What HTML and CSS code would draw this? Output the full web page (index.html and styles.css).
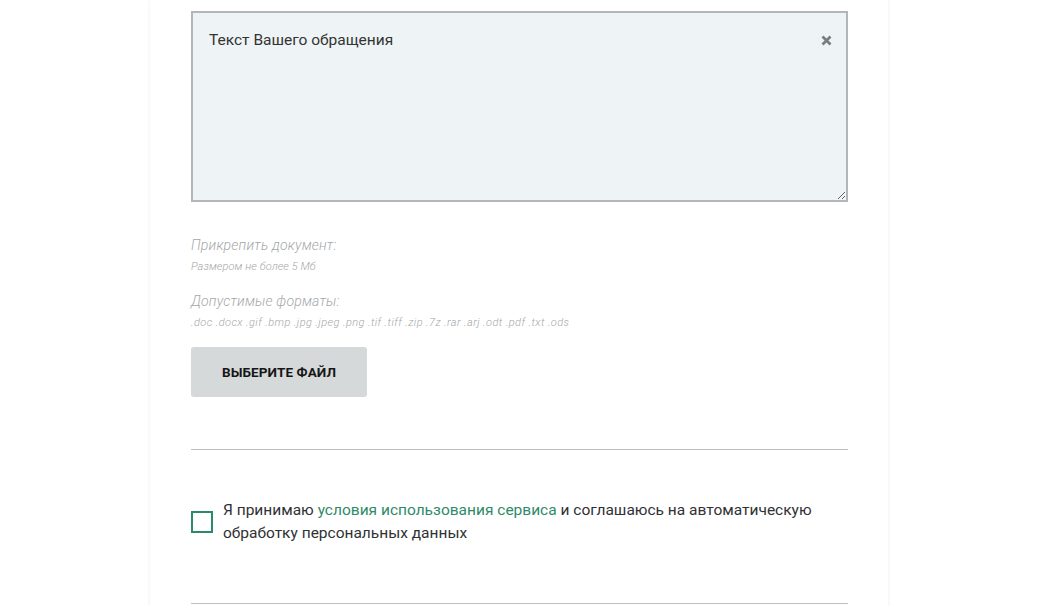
FILE: index.html
```html
<!DOCTYPE html>
<html lang="ru">
<head>
<meta charset="utf-8">
<title>Обращение</title>
<link rel="stylesheet" href="styles.css">
</head>
<body>
<main class="card">
  <div class="message">
    <textarea class="message__input" placeholder="Текст Вашего обращения"></textarea>
    <span class="message__clear" aria-label="Очистить">
      <svg width="11" height="11" viewBox="0 0 11 11"><path d="M1.5 1.5 L9.5 9.5 M9.5 1.5 L1.5 9.5" stroke="#7a7d80" stroke-width="2.8" stroke-linecap="butt"/></svg>
    </span>
  </div>

  <section class="attach">
    <p class="attach__title">Прикрепить документ:</p>
    <p class="attach__note">Размером не более 5 Мб</p>
    <p class="attach__title attach__title--second">Допустимые форматы:</p>
    <p class="attach__note attach__note--formats">.doc .docx .gif .bmp .jpg .jpeg .png .tif .tiff .zip .7z .rar .arj .odt .pdf .txt .ods</p>
    <button class="attach__button" type="button">ВЫБЕРИТЕ ФАЙЛ</button>
  </section>

  <hr class="divider">

  <label class="agree">
    <span class="agree__box"></span>
    <span class="agree__text">Я принимаю <a class="agree__link" href="#">условия использования сервиса</a> и соглашаюсь на автоматическую обработку персональных данных</span>
  </label>

  <hr class="divider divider--bottom">
</main>
</body>
</html>
```

FILE: styles.css
```css
html, body {
  margin: 0;
  padding: 0;
  background: #ffffff;
}

body {
  font-family: Roboto, "Liberation Sans", Arial, sans-serif;
  color: #333333;
}

.card {
  width: 738px;
  margin-left: 150px;
  box-sizing: border-box;
  padding: 11px 40px 40px 41px;
  background: #ffffff;
  box-shadow: 0 0 3px rgba(0, 0, 0, 0.09);
  min-height: 700px;
}

.message {
  position: relative;
  width: 657px;
}

.message__input {
  display: block;
  width: 657px;
  height: 191px;
  box-sizing: border-box;
  margin: 0;
  padding: 18px 16px;
  border: 2px solid #b3b6b8;
  border-radius: 0;
  background: #eef3f6;
  font-family: Roboto, "Liberation Sans", Arial, sans-serif;
  font-size: 15.5px;
  color: #333333;
  resize: vertical;
  outline: none;
}

.message__input::placeholder {
  color: #333333;
  opacity: 1;
}

.message__clear {
  position: absolute;
  top: 24px;
  right: 16px;
  width: 11px;
  height: 11px;
  display: flex;
}

.attach {
  display: flex;
  flex-direction: column;
  align-items: flex-start;
  padding-top: 35px;
}

.attach p {
  margin: 0;
}

.attach__title {
  font-size: 14px;
  line-height: 16px;
  font-style: italic;
  font-weight: 300;
  color: #a4a7a9;
  letter-spacing: 0.2px;
}

.attach__title--second {
  margin-top: 20px !important;
}

.attach__note {
  margin-top: 7px !important;
  font-size: 11px;
  line-height: 13px;
  font-style: italic;
  font-weight: 300;
  color: #a4a7a9;
  letter-spacing: 0.1px;
}

.attach__note--formats {
  letter-spacing: 0.42px;
}

.attach__button {
  margin-top: 18px;
  width: 176px;
  height: 50px;
  border: none;
  border-radius: 3px;
  background: #d5d9da;
  font-family: Roboto, "Liberation Sans", Arial, sans-serif;
  font-size: 13.5px;
  font-weight: 700;
  color: #161616;
  letter-spacing: 0.1px;
  cursor: pointer;
}

.divider {
  width: 657px;
  margin: 52px 0 0 0;
  border: none;
  border-top: 1px solid #bdbfc1;
  height: 0;
}

.agree {
  display: flex;
  align-items: center;
  gap: 10px;
  margin-top: 49px;
  cursor: pointer;
}

.agree__box {
  flex: none;
  width: 22px;
  height: 22px;
  box-sizing: border-box;
  border: 2px solid #2a8a6c;
}

.agree__text {
  font-size: 15.5px;
  line-height: 23px;
  color: #2f3133;
  width: 610px;
}

.agree__link {
  color: #2f8a68;
  text-decoration: none;
}

.divider--bottom {
  margin-top: 58px;
}
```
